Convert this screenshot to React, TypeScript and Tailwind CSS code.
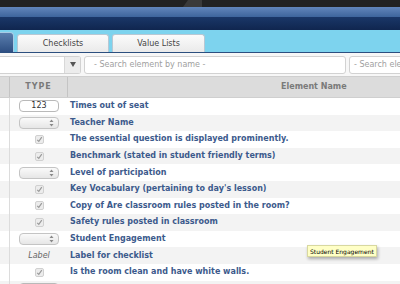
import React from 'react';

type Kind = 'number' | 'select' | 'check' | 'label' | 'text';

const rows: { kind: Kind; name: string }[] = [
  { kind: 'number', name: 'Times out of seat' },
  { kind: 'select', name: 'Teacher Name' },
  { kind: 'check', name: 'The essential question is displayed prominently.' },
  { kind: 'check', name: 'Benchmark (stated in student friendly terms)' },
  { kind: 'select', name: 'Level of participation' },
  { kind: 'check', name: "Key Vocabulary (pertaining to day's lesson)" },
  { kind: 'check', name: 'Copy of Are classroom rules posted in the room?' },
  { kind: 'check', name: 'Safety rules posted in classroom' },
  { kind: 'select', name: 'Student Engagement' },
  { kind: 'label', name: 'Label for checklist' },
  { kind: 'check', name: 'Is the room clean and have white walls.' },
  { kind: 'text', name: '' },
];

const TypeControl = ({ kind }: { kind: Kind }) => {
  if (kind === 'number') {
    return (
      <div className="w-[40px] h-[12px] rounded-[4px] border border-[#b9b9b9] bg-white flex items-center justify-center text-[8px] text-[#333] leading-none">
        123
      </div>
    );
  }
  if (kind === 'text') {
    return <div className="w-[40px] h-[12px] rounded-[4px] border border-[#b9b9b9] bg-white" />;
  }
  if (kind === 'select') {
    return (
      <div className="w-[40px] h-[12px] rounded-[4px] border border-[#c4c4c4] bg-gradient-to-b from-[#fafafa] to-[#e6e6e6] flex items-center justify-end pr-[4px]">
        <svg width="5" height="8" viewBox="0 0 5 8">
          <path d="M2.5 0.5 L4.5 3 H0.5 Z" fill="#888" />
          <path d="M2.5 7.5 L4.5 5 H0.5 Z" fill="#888" />
        </svg>
      </div>
    );
  }
  if (kind === 'check') {
    return (
      <div className="w-[9px] h-[9px] rounded-[2px] border border-[#d0d0d0] bg-[#ececec] flex items-center justify-center">
        <svg width="7" height="7" viewBox="0 0 7 7">
          <path d="M1.2 3.8 L2.8 5.4 L5.8 1.2" stroke="#9a9a9a" strokeWidth="1.2" fill="none" />
        </svg>
      </div>
    );
  }
  return <span className="italic text-[8px] text-[#666]">Label</span>;
};

export default function App() {
  return (
    <div className="w-[400px] h-[284px] overflow-hidden bg-white relative font-['DejaVu_Sans',sans-serif]">
      {/* top chrome */}
      <div className="h-[7px] bg-[#222] relative">
        <svg className="absolute left-[180px] top-0" width="22" height="7" viewBox="0 0 22 7">
          <path d="M3 7 L8 0 H22 V7 Z" fill="#3a3a3a" />
        </svg>
      </div>
      <div className="h-[10px] bg-gradient-to-b from-[#6286bb] to-[#3e659c]" />
      <div className="h-[13px] bg-gradient-to-b from-[#1a3768] to-[#10264f]" />

      {/* tabs */}
      <div className="h-[23px] bg-[#7dd3ee] border-b border-[#2c4f7f] flex items-end gap-[3px]">
        <div className="w-[14px] h-[20px] rounded-tr-[4px] bg-gradient-to-b from-[#5b7fae] to-[#2e4f82] border-r border-t border-[#a8cbe4]" />
        <div className="w-[92px] h-[18px] rounded-t-[3px] bg-gradient-to-b from-[#fbfbfb] to-[#eaeaea] border border-b-0 border-[#b8c8d4] flex items-center justify-center text-[8px] text-[#444]">
          Checklists
        </div>
        <div className="w-[93px] h-[18px] rounded-t-[3px] bg-gradient-to-b from-[#fbfbfb] to-[#eaeaea] border border-b-0 border-[#b8c8d4] flex items-center justify-center text-[8px] text-[#444]">
          Value Lists
        </div>
      </div>

      {/* search row */}
      <div className="h-[23px] bg-[#f7f7f7] flex items-center gap-[3px]">
        <div className="w-[81px] shrink-0 h-[18px] rounded-r-[3px] border border-l-0 border-[#d2d2d2] bg-white flex justify-end">
          <div className="w-[16px] h-full bg-[#ececec] border-l border-[#d8d8d8] flex items-center justify-center">
            <svg width="6" height="5" viewBox="0 0 6 5">
              <path d="M0 0 H6 L3 5 Z" fill="#555" />
            </svg>
          </div>
        </div>
        <div className="w-[262px] shrink-0 h-[18px] rounded-[3px] border border-[#d2d2d2] bg-white flex items-center pl-[9px] text-[8px] text-[#a0a0a0]">
          - Search element by name -
        </div>
        <div className="w-[120px] shrink-0 h-[18px] rounded-[3px] border border-[#d2d2d2] bg-white flex items-center pl-[4px] text-[8px] text-[#a0a0a0] whitespace-nowrap overflow-hidden">
          - Search element by name -
        </div>
      </div>

      {/* table header */}
      <div className="h-[22px] bg-[#dcdcdc] border-t border-b border-[#cfcfcf] flex text-[8px] font-bold text-[#7a7a7a]">
        <div className="w-[10px] border-r border-[#c4c4c4]" />
        <div className="w-[58px] border-r border-[#c4c4c4] flex items-center justify-center tracking-[1px]">TYPE</div>
        <div className="flex-1 flex items-center pl-[213px] whitespace-nowrap">Element Name</div>
      </div>

      {/* rows */}
      {rows.map((r, i) => (
        <div key={i} className={`h-[16.6px] flex ${i % 2 === 0 ? 'bg-white' : 'bg-[#f3f3f3]'}`}>
          <div className="w-[10px] border-r border-[#dcdcdc]" />
          <div className="w-[58px] flex items-center justify-center">
            <TypeControl kind={r.kind} />
          </div>
          <div className="flex-1 flex items-center pl-[2px] text-[8px] font-bold text-[#3c5a8c] whitespace-nowrap">
            {r.name}
          </div>
        </div>
      ))}

      {/* tooltip */}
      <div className="absolute left-[307px] top-[245px] h-[12px] px-[2px] bg-[#ffffc6] border border-[#d8d8a0] shadow-[1px_2px_3px_rgba(0,0,0,0.3)] flex items-center text-[6px] text-black whitespace-nowrap">
        Student Engagement
      </div>
    </div>
  );
}
